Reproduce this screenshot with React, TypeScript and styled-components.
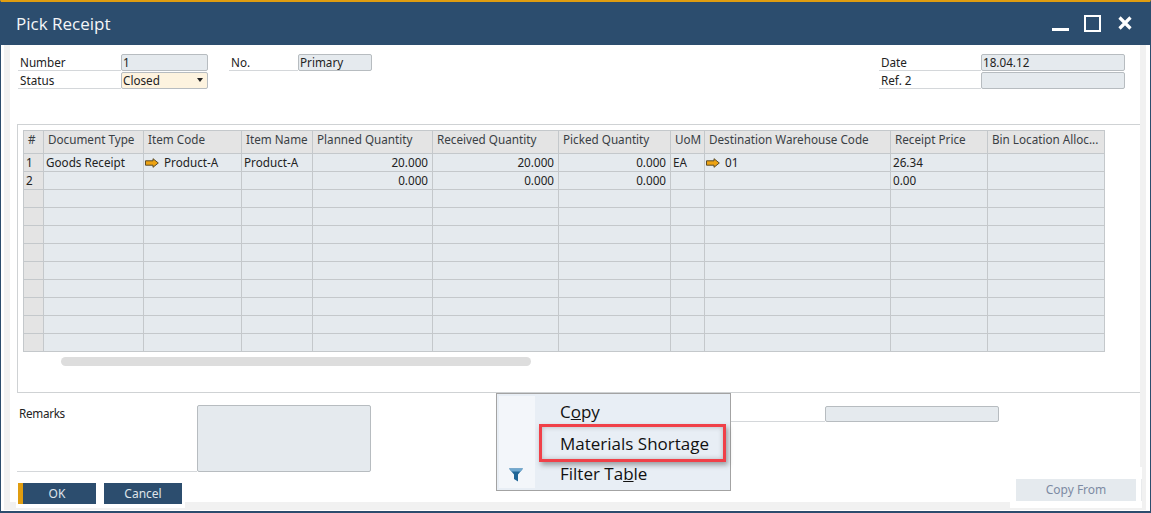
import React from "react";
import styled, { createGlobalStyle } from "styled-components";

const Global = createGlobalStyle`
  html, body { margin: 0; padding: 0; background: #fff; }
  * { box-sizing: border-box; }
`;

const navy = "#2c4d6e";
const fieldBg = "#e5eaee";
const gridLine = "#c4c8cb";
const strip = "#f1f1f1";
const uiFont = `"Noto Sans", "Open Sans", sans-serif`;

const Window = styled.div`
  position: relative;
  width: 1151px;
  height: 513px;
  display: flex;
  flex-direction: column;
  background: #fff;
  border-top: 2px solid #e09d10;
  border-left: 1px solid ${navy};
  border-right: 1px solid ${navy};
  border-bottom: 2px solid ${navy};
  font-family: ${uiFont};
  font-size: 11.7px;
  color: #222;
  overflow: hidden;
`;

const TitleBar = styled.header`
  height: 43px;
  flex: none;
  background: ${navy};
  display: flex;
  align-items: center;
  justify-content: space-between;
  padding: 0 16px 0 15px;
`;

const Title = styled.h1`
  margin: 0;
  font: 400 17px "Open Sans", sans-serif;
  color: #f4f6f8;
`;

const WinControls = styled.div`
  display: flex;
  align-items: center;
  gap: 15px;
`;

const Body = styled.main`
  flex: 1;
  display: flex;
  flex-direction: column;
  margin: 0 4px 1px 3px;
  padding-left: 7px;
  border-left: 6px solid ${strip};
  border-right: 6px solid ${strip};
  border-bottom: 8px solid ${strip};
  min-height: 0;
`;

const Header = styled.section`
  height: 79px;
  flex: none;
  padding: 9px 0 0 1px;
  display: grid;
  grid-template-columns: 211px 650px 246px;
`;

const FieldColumn = styled.div`
  display: flex;
  flex-direction: column;
  gap: 1px;
`;

const FieldRow = styled.div<{ $label: number; $field: number; $short?: boolean }>`
  display: grid;
  grid-template-columns: ${(p) => p.$label}px ${(p) => p.$field}px;
  height: ${(p) => (p.$short ? 16 : 17)}px;
`;

const Label = styled.span`
  border-bottom: 1px solid #d4d7da;
  line-height: 16px;
  color: #222;
  padding-left: 2px;
`;

const Field = styled.div`
  background: ${fieldBg};
  border: 1px solid #b7bcc0;
  border-radius: 2px;
  line-height: 14px;
  padding-left: 1px;
  white-space: nowrap;
`;

const SelectField = styled(Field)`
  background: #fdf3df;
  display: flex;
  align-items: flex-start;
  justify-content: space-between;
  padding-right: 4px;
`;

const Caret = styled.i`
  width: 0;
  height: 0;
  margin-top: 5px;
  border-left: 3.5px solid transparent;
  border-right: 3.5px solid transparent;
  border-top: 4px solid #222;
`;

const GridPanel = styled.section`
  height: 269px;
  flex: none;
  border-top: 1px solid #cfd2d4;
  border-left: 1px solid #cfd2d4;
  border-bottom: 1px solid #cfd2d4;
  padding: 5px 0 0 5px;
`;

const Table = styled.table`
  border-collapse: separate;
  border-spacing: 0;
  table-layout: fixed;
  width: 1082px;
  border-top: 1px solid ${gridLine};
  border-left: 1px solid ${gridLine};
  font-size: 11.7px;
`;

const Th = styled.th`
  height: 23px;
  padding: 0 3px 6px 4px;
  line-height: 16px;
  background: #e4e4e4;
  font-weight: 400;
  color: #3a3f44;
  text-align: left;
  white-space: nowrap;
  overflow: hidden;
  border-right: 1px solid ${gridLine};
  border-bottom: 1px solid ${gridLine};
`;

const Td = styled.td<{ $num?: boolean; $index?: boolean }>`
  height: 18px;
  padding: 0 ${(p) => (p.$num ? "4px" : "2px")} 0 2px;
  background: ${(p) => (p.$index ? "#e4e4e4" : fieldBg)};
  border-right: 1px solid ${gridLine};
  border-bottom: 1px solid ${gridLine};
  text-align: ${(p) => (p.$num ? "right" : "left")};
  white-space: nowrap;
  overflow: hidden;
  line-height: 15px;
  color: #222;
`;

const LinkCell = styled.span`
  display: flex;
  align-items: center;
  gap: 5px;
  margin-left: -1px;
`;

const ScrollTrack = styled.div`
  width: 470px;
  height: 9px;
  margin: 5px 0 0 38px;
  background: #dddddd;
  border-radius: 5px;
`;

const Footer = styled.section`
  flex: 1;
  display: flex;
  flex-direction: column;
  min-height: 0;
`;

const RemarksRow = styled.div`
  height: 79px;
  flex: none;
  padding: 12px 0 0 0;
  display: flex;
  align-items: flex-start;
`;

const RemarksLabel = styled.div`
  width: 180px;
  height: 67px;
  border-bottom: 1px solid #d4d7da;
  padding: 0 0 0 2px;
  line-height: 17px;
  letter-spacing: -0.3px;
  color: #222;
`;

const RemarksBox = styled(Field)`
  width: 174px;
  height: 67px;
`;

const TotalRow = styled.div`
  width: 628px;
  height: 16px;
  margin-top: 1px;
  display: flex;
`;

const TotalLine = styled.span`
  flex: 1;
  height: 16px;
  border-bottom: 1px solid #d4d7da;
  margin-left: 200px;
`;

const TotalField = styled(Field)`
  width: 174px;
  height: 16px;
`;

const Actions = styled.div`
  height: 30px;
  flex: none;
  display: flex;
  align-items: flex-start;
  justify-content: space-between;
`;

const ButtonGroup = styled.div`
  height: 30px;
  margin: 6px 0 0 -1px;
  padding: 5px 3px 0 2px;
  display: flex;
  align-items: flex-start;
  gap: 8px;
  background: #fff;
  position: relative;
`;

const Button = styled.button<{ $primary?: boolean }>`
  width: 78px;
  height: 21px;
  padding: 0 ${(p) => (p.$primary ? "5px" : "0")} 0 0;
  border: 0;
  border-left: ${(p) => (p.$primary ? "5px solid #e09d10" : "0")};
  background: ${navy};
  color: #dfe4ea;
  font: 400 12px ${uiFont};
`;

const CopyFromWrap = styled.div`
  position: relative;
  width: 132px;
  height: 41px;
  margin: -5px -2px 0 0;
  padding: 12px 6px 0;
  background: #fff;

  &::after {
    content: "";
    position: absolute;
    right: 0;
    top: 12px;
    width: 1px;
    height: 22px;
    background: #e8eaec;
  }
`;

const CopyFromButton = styled.button`
  display: block;
  width: 120px;
  height: 22px;
  padding: 0 0 2px;
  border: 0;
  background: ${fieldBg};
  color: #7d8ba3;
  font: 400 12px ${uiFont};
`;

const Menu = styled.div`
  position: absolute;
  left: 495px;
  top: 391px;
  width: 235px;
  height: 98px;
  border: 1px solid #a3a3a3;
  background: #e8eef5;
  font: 400 17px "Open Sans", sans-serif;
  color: #111;
  display: flex;
  flex-direction: column;
  padding: 2px 2px 2px 37px;
  z-index: 3;
`;

const MenuGutter = styled.div`
  position: absolute;
  left: 2px;
  top: 2px;
  bottom: 2px;
  width: 36px;
  background: #f3f6fa;
`;

const MenuItem = styled.div<{ $nudge?: boolean }>`
  position: relative;
  height: 31px;
  line-height: ${(p) => (p.$nudge ? 33 : 31)}px;
  padding-left: 26px;
  white-space: nowrap;
`;

const Callout = styled.div`
  position: absolute;
  left: 5px;
  top: 0;
  width: 187px;
  height: 38px;
  margin-top: -3px;
  border: 3px solid #f04048;
  box-shadow: 2px 3px 5px rgba(60, 60, 60, 0.45), inset 0 0 5px rgba(60, 60, 60, 0.3);
`;

const FilterIcon = styled.svg`
  position: absolute;
  left: 12px;
  bottom: 8px;
`;

const ArrowIcon = () => (
  <svg width="14" height="10" viewBox="0 0 14 10" style={{ flex: "none" }}>
    <path d="M0.5 2.8H8V0.7L13.3 5 8 9.3V7.2H0.5Z" fill="#eda312" stroke="#5c4c28" strokeWidth="1" />
  </svg>
);

const columns = [
  ["#", 20], ["Document Type", 100], ["Item Code", 98], ["Item Name", 71],
  ["Planned Quantity", 120], ["Received Quantity", 126], ["Picked Quantity", 112],
  ["UoM", 34], ["Destination Warehouse Code", 186], ["Receipt Price", 97],
  ["Bin Location Alloc...", 117],
] as const;

const emptyRows = Array.from({ length: 9 }, (_, i) => i);

export default function App() {
  return (
    <Window>
      <Global />
      <TitleBar>
        <Title>Pick Receipt</Title>
        <WinControls>
          <svg width="17" height="17" viewBox="0 0 17 17"><rect x="0" y="13" width="17" height="3" fill="#fff" /></svg>
          <svg width="17" height="17" viewBox="0 0 17 17"><rect x="1" y="1" width="15" height="15" fill="none" stroke="#fff" strokeWidth="2" /></svg>
          <svg width="18" height="17" viewBox="0 0 18 17"><path d="M3.5 2.5L14.5 13.5M14.5 2.5L3.5 13.5" stroke="#fff" strokeWidth="3.2" /></svg>
        </WinControls>
      </TitleBar>
      <Body>
        <Header>
          <FieldColumn>
            <FieldRow $label={103} $field={87}><Label>Number</Label><Field>1</Field></FieldRow>
            <FieldRow $label={103} $field={87} $short>
              <Label>Status</Label>
              <SelectField>Closed<Caret /></SelectField>
            </FieldRow>
          </FieldColumn>
          <FieldColumn>
            <FieldRow $label={69} $field={74}><Label>No.</Label><Field>Primary</Field></FieldRow>
          </FieldColumn>
          <FieldColumn>
            <FieldRow $label={102} $field={144}><Label>Date</Label><Field>18.04.12</Field></FieldRow>
            <FieldRow $label={102} $field={144} $short><Label>Ref. 2</Label><Field /></FieldRow>
          </FieldColumn>
        </Header>
        <GridPanel>
          <Table>
            <colgroup>
              {columns.map(([name, w]) => <col key={name} width={w} />)}
            </colgroup>
            <thead>
              <tr>{columns.map(([name]) => <Th key={name}>{name}</Th>)}</tr>
            </thead>
            <tbody>
              <tr>
                <Td $index>1</Td>
                <Td>Goods Receipt</Td>
                <Td><LinkCell><ArrowIcon />Product-A</LinkCell></Td>
                <Td>Product-A</Td>
                <Td $num>20.000</Td>
                <Td $num>20.000</Td>
                <Td $num>0.000</Td>
                <Td>EA</Td>
                <Td><LinkCell><ArrowIcon />01</LinkCell></Td>
                <Td>26.34</Td>
                <Td />
              </tr>
              <tr>
                <Td $index>2</Td>
                <Td /><Td /><Td />
                <Td $num>0.000</Td>
                <Td $num>0.000</Td>
                <Td $num>0.000</Td>
                <Td /><Td />
                <Td>0.00</Td>
                <Td />
              </tr>
              {emptyRows.map((r) => (
                <tr key={r}>
                  <Td $index />
                  {columns.slice(1).map(([name]) => <Td key={name} />)}
                </tr>
              ))}
            </tbody>
          </Table>
          <ScrollTrack />
        </GridPanel>
        <Footer>
          <RemarksRow>
            <RemarksLabel>Remarks</RemarksLabel>
            <RemarksBox />
            <TotalRow>
              <TotalLine />
              <TotalField />
            </TotalRow>
          </RemarksRow>
          <Actions>
            <ButtonGroup>
              <Button $primary>OK</Button>
              <Button>Cancel</Button>
            </ButtonGroup>
            <CopyFromWrap><CopyFromButton>Copy From</CopyFromButton></CopyFromWrap>
          </Actions>
        </Footer>
      </Body>
      <Menu>
        <MenuGutter />
        <MenuItem>C<u>o</u>py</MenuItem>
        <MenuItem $nudge>
          Materials Shortage
          <Callout />
        </MenuItem>
        <MenuItem>Filter Ta<u>b</u>le</MenuItem>
        <FilterIcon width="14" height="14" viewBox="0 0 14 14">
          <path d="M0 0.5H14L9 6.5V13.5L5 11V6.5Z" fill="#1f6596" />
          <path d="M0 0.5H14L11.6 3.5H2.4Z" fill="#6fa8cf" />
        </FilterIcon>
      </Menu>
    </Window>
  );
}
